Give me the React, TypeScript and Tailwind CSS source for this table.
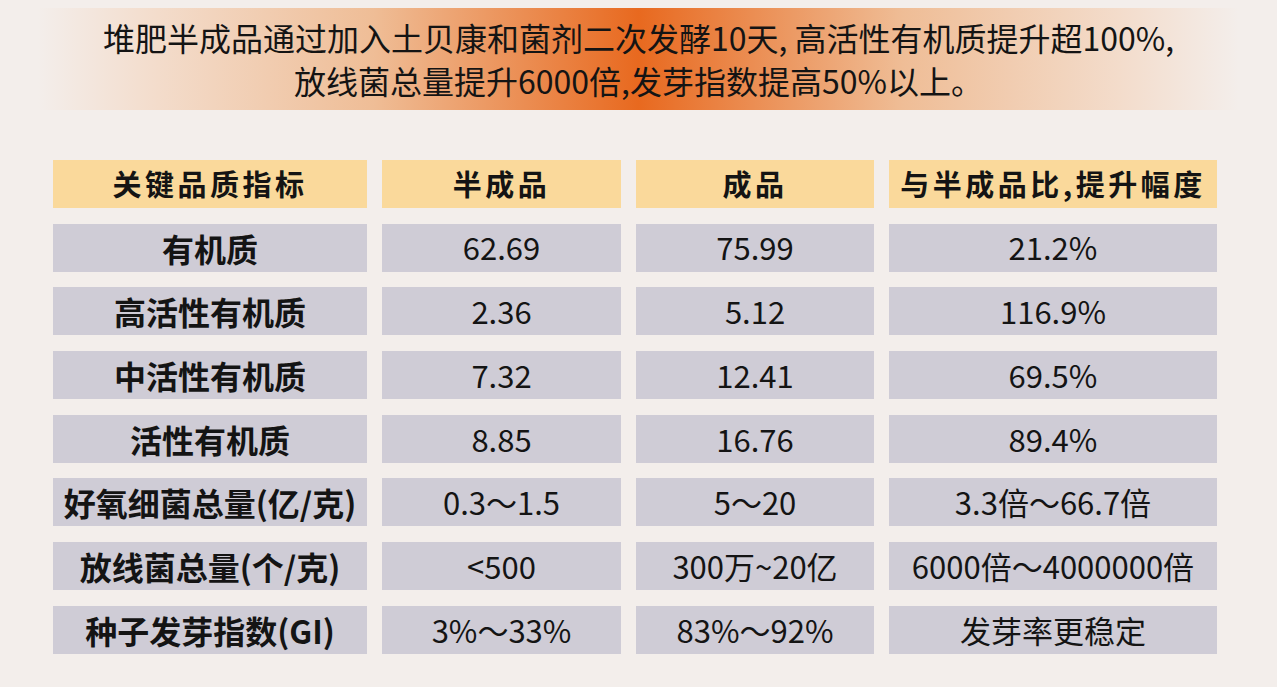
const HEADERS = ['关键品质指标', '半成品', '成品', '与半成品比,提升幅度'];

type Row = { name: string; cells: string[] };

const ROWS: Row[] = [
  { name: '有机质', cells: ['62.69', '75.99', '21.2%'] },
  { name: '高活性有机质', cells: ['2.36', '5.12', '116.9%'] },
  { name: '中活性有机质', cells: ['7.32', '12.41', '69.5%'] },
  { name: '活性有机质', cells: ['8.85', '16.76', '89.4%'] },
  { name: '好氧细菌总量(亿/克)', cells: ['0.3～1.5', '5～20', '3.3倍～66.7倍'] },
  { name: '放线菌总量(个/克)', cells: ['<500', '300万~20亿', '6000倍～4000000倍'] },
  { name: '种子发芽指数(GI)', cells: ['3%～33%', '83%～92%', '发芽率更稳定'] },
];

export default function App() {
  return (
    <div
      className="w-[1277px] h-[687px] bg-[#f3eeeb] text-[#141414] overflow-hidden"
      style={{ fontFamily: '"Noto Sans CJK SC", "Noto Sans", sans-serif' }}
    >
      <div className="pt-[8px] px-[38px]">
        <div className="h-[102px] flex flex-col items-center justify-center bg-[linear-gradient(to_right,#f3eeeb_0%,#f3dccb_10%,#efbd96_28%,#e8691f_50%,#efbd96_72%,#f3dccb_90%,#f3eeeb_100%)]">
          <p className="text-[32px] leading-[43px]">堆肥半成品通过加入土贝康和菌剂二次发酵10天, 高活性有机质提升超100%,</p>
          <p className="text-[32px] leading-[43px]">放线菌总量提升6000倍,发芽指数提高50%以上。</p>
        </div>
      </div>

      <div className="mt-[50px] ml-[53px] grid grid-cols-[314px_239px_238px_328px] gap-x-[15px] gap-y-[15.7px] auto-rows-[48px]">
        {HEADERS.map((h) => (
          <div key={h} className="bg-[#fad99b] flex items-center justify-center text-[29px] font-bold tracking-[3.5px]">
            {h}
          </div>
        ))}
        {ROWS.map((row) => (
          <>
            <div key={row.name} className="bg-[#cfccd6] flex items-center justify-center font-bold text-[32px]">
              {row.name}
            </div>
            {row.cells.map((c, i) => (
              <div key={row.name + i} className="bg-[#cfccd6] flex items-center justify-center text-[31px]">
                {c}
              </div>
            ))}
          </>
        ))}
      </div>
    </div>
  );
}
